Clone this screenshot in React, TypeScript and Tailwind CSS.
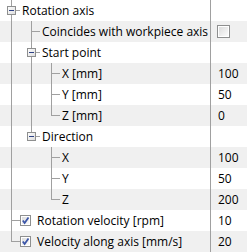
import React from "react";

type Guide = "I" | "T" | "L" | " ";

type Row = {
  label: string;
  guides: Guide[];
  expander?: boolean;
  check?: boolean;
  value?: string;
  valueCheck?: boolean;
};

const rows: Row[] = [
  { label: "Rotation axis", guides: ["T"], expander: true },
  { label: "Coincides with workpiece axis", guides: ["I", "T"], valueCheck: true },
  { label: "Start point", guides: ["I", "T"], expander: true },
  { label: "X [mm]", guides: ["I", "I", "T"], value: "100" },
  { label: "Y [mm]", guides: ["I", "I", "T"], value: "50" },
  { label: "Z [mm]", guides: ["I", "I", "L"], value: "0" },
  { label: "Direction", guides: ["I", "L"], expander: true },
  { label: "X", guides: ["I", " ", "T"], value: "100" },
  { label: "Y", guides: ["I", " ", "T"], value: "50" },
  { label: "Z", guides: ["I", " ", "L"], value: "200" },
  { label: "Rotation velocity [rpm]", guides: ["T"], check: true, value: "10" },
  { label: "Velocity along axis [mm/s]", guides: ["L"], check: true, value: "20" },
];

function GuideCell({ kind, expander }: { kind: Guide; expander?: boolean }) {
  const stroke = "#a0a0a0";
  return (
    <svg width="20" height="21" viewBox="0 0 20 21" className="shrink-0" shapeRendering="crispEdges">
      {kind !== " " && (
        <>
          <line x1="10.5" y1="0" x2="10.5" y2={kind === "L" ? 11 : 21} stroke={stroke} />
          {kind !== "I" && <line x1="10" y1="10.5" x2="19" y2="10.5" stroke={stroke} />}
        </>
      )}
      {expander && (
        <>
          <defs>
            <linearGradient id="exp" x1="0" y1="0" x2="1" y2="1">
              <stop offset="0" stopColor="#ffffff" />
              <stop offset="1" stopColor="#dcdcdc" />
            </linearGradient>
          </defs>
          <rect x="6.5" y="6.5" width="8" height="8" fill="url(#exp)" stroke="#8e8f8f" />
          <line x1="8" y1="10.5" x2="13" y2="10.5" stroke="#2d4185" />
        </>
      )}
    </svg>
  );
}

function CheckBox({ checked, size }: { checked?: boolean; size: number }) {
  return (
    <svg width={size} height={size} viewBox={`0 0 ${size} ${size}`} className="shrink-0" shapeRendering="crispEdges">
      <defs>
        <linearGradient id={`cb${size}`} x1="0" y1="0" x2="1" y2="1">
          <stop offset="0" stopColor="#dcdcdc" />
          <stop offset="1" stopColor="#fbfbfb" />
        </linearGradient>
      </defs>
      <rect x="0.5" y="0.5" width={size - 1} height={size - 1} fill="#ffffff" stroke="#8e8f8f" />
      <rect x="2" y="2" width={size - 4} height={size - 4} fill={`url(#cb${size})`} />
      {checked && (
        <path
          d={`M2.8 ${size / 2} L${size * 0.42} ${size - 3} L${size - 2.5} 2.5`}
          fill="none"
          stroke="#3c56a8"
          strokeWidth="1.8"
          shapeRendering="auto"
        />
      )}
    </svg>
  );
}

export default function App() {
  return (
    <div
      className="w-[247px] h-[252px] overflow-hidden bg-white text-[12px] text-black"
      style={{ fontFamily: '"Open Sans", "Noto Sans", sans-serif' }}
    >
      {rows.map((r, i) => (
        <div key={i} className={"flex h-[21px] " + (i % 2 === 1 ? "bg-[#f0f0f0]" : "bg-white")}>
          <div className="flex w-[210px] items-center pl-[1px] overflow-hidden whitespace-nowrap">
            {r.guides.map((g, j) => (
              <GuideCell key={j} kind={g} expander={r.expander && j === r.guides.length - 1} />
            ))}
            {r.check && (
              <span className="ml-[-1px] mr-[5px] flex">
                <CheckBox checked size={11} />
              </span>
            )}
            <span className="ml-[1px] leading-[21px]">{r.label}</span>
          </div>
          <div className="w-px bg-[#a0a0a0]" />
          <div className="flex flex-1 items-center">
            {r.valueCheck ? (
              <span className="ml-[6px] flex">
                <CheckBox size={13} />
              </span>
            ) : (
              <span className="ml-[7px] leading-[21px]">{r.value}</span>
            )}
          </div>
        </div>
      ))}
    </div>
  );
}
